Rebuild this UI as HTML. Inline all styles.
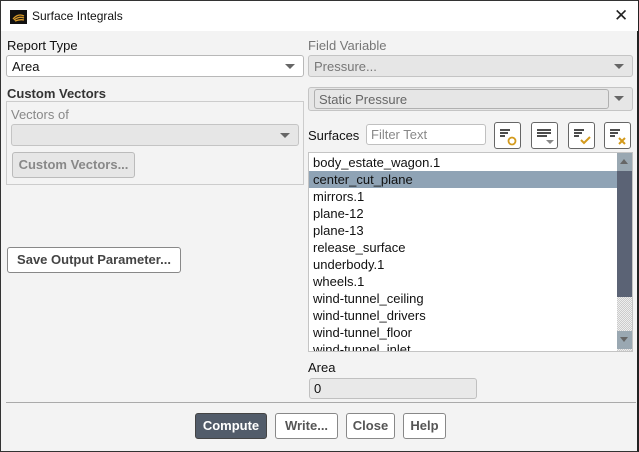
<!DOCTYPE html>
<html><head><style>
*{box-sizing:border-box;margin:0;padding:0}
body{width:639px;height:452px;background:#fff;font-family:"Liberation Sans","DejaVu Sans",sans-serif;font-size:13px;color:#111;position:relative;overflow:hidden}
.win{position:absolute;left:0;top:0;width:639px;height:452px;border:1px solid #333;border-right:2px solid #222;background:#f3f3f3}
.title{position:absolute;left:0;top:0;width:637px;height:30px;background:#fff}
.a{position:absolute}
.dd{position:absolute;border:1px solid #b8b8b8;border-radius:3px;background:#fff;padding:3px 0 0 5px;height:22px}
.dd.g{background:#e6e6e6;color:#777;border-color:#c4c4c4}
.arr{position:absolute;right:8px;top:8px;width:0;height:0;border-left:5px solid transparent;border-right:5px solid transparent;border-top:5px solid #666}
.btn{position:absolute;border:1px solid #888;border-radius:3px;background:#fff;font-weight:bold;color:#555;text-align:center;height:26px;line-height:24px}
.ib{position:absolute;top:121px;width:27px;height:27px;border:1px solid #666;border-radius:3px;background:#fff}
.li{height:17px;line-height:17px;padding-left:4px;white-space:nowrap}
</style></head><body>
<div class="win">
<div class="title">
<svg class="a" style="left:9px;top:9px" width="17" height="14"><rect width="17" height="14" fill="#111"/><path d="M3 9 Q8 3 14 6 M4 10 Q9 6 14 8 M5 11 Q10 9 14 10" stroke="#d89a2a" stroke-width="1.3" fill="none"/></svg>
<div class="a" style="left:31px;top:8px;font-size:12px">Surface Integrals</div>
<div class="a" style="left:613px;top:5px;font-size:17px;color:#222">✕</div>
</div>
<div class="a" style="left:6px;top:37px">Report Type</div>
<div class="dd" style="left:5px;top:54px;width:298px">Area<div class="arr"></div></div>
<div class="a" style="left:6px;top:85px;font-weight:bold;color:#333">Custom Vectors</div>
<div class="a" style="left:5px;top:100px;width:298px;height:84px;border:1px solid #ccc"></div>
<div class="a" style="left:10px;top:106px;color:#888">Vectors of</div>
<div class="dd g" style="left:10px;top:123px;width:288px"><div class="arr"></div></div>
<div class="btn" style="left:11px;top:151px;width:123px;background:#e6e6e6;border-color:#bbb;color:#888">Custom Vectors...</div>
<div class="btn" style="left:6px;top:246px;width:174px;color:#444">Save Output Parameter...</div>

<div class="a" style="left:307px;top:37px;color:#777">Field Variable</div>
<div class="dd g" style="left:307px;top:54px;width:325px">Pressure...<div class="arr"></div></div>
<div class="a" style="left:307px;top:86px;width:325px;height:24px;border:1px solid #c4c4c4;border-radius:3px;background:#e6e6e6"><div class="a" style="left:5px;top:1px;width:295px;height:20px;border:1px solid #b0b0b0;border-radius:3px;padding:2px 0 0 4px;color:#666">Static Pressure</div><div class="arr"></div></div>
<div class="a" style="left:307px;top:127px">Surfaces</div>
<div class="a" style="left:365px;top:123px;width:120px;height:21px;border:1px solid #c0c0c0;border-radius:3px;background:#fff;color:#888;padding:2px 0 0 4px">Filter Text</div>
<div class="ib" style="left:493px"><svg width="25" height="25"><path d="M5 7h10M5 10h8M5 13h5" stroke="#111" stroke-width="1.6"/><circle cx="17" cy="18" r="3.5" stroke="#d39a1c" stroke-width="1.8" fill="none"/></svg></div>
<div class="ib" style="left:530px"><svg width="25" height="25"><path d="M5 7h14M5 10h14M5 13h10" stroke="#111" stroke-width="1.6"/><path d="M14 17h8l-4 4z" fill="#888"/></svg></div>
<div class="ib" style="left:567px"><svg width="25" height="25"><path d="M5 7h10M5 10h8M5 13h5" stroke="#111" stroke-width="1.6"/><path d="M12 17l3 3 6-6" stroke="#d39a1c" stroke-width="2" fill="none"/></svg></div>
<div class="ib" style="left:603px"><svg width="25" height="25"><path d="M5 7h10M5 10h8M5 13h5" stroke="#111" stroke-width="1.6"/><path d="M14 15l6 6M20 15l-6 6" stroke="#d39a1c" stroke-width="2"/></svg></div>

<div class="a" style="left:307px;top:151px;width:325px;height:200px;border:1px solid #c4c4c4;background:#fff;overflow:hidden">
<div style="width:308px;padding-top:1px">
<div class="li">body_estate_wagon.1</div>
<div class="li" style="background:#8fa3b5">center_cut_plane</div>
<div class="li">mirrors.1</div><div class="li">plane-12</div><div class="li">plane-13</div><div class="li">release_surface</div><div class="li">underbody.1</div><div class="li">wheels.1</div><div class="li">wind-tunnel_ceiling</div><div class="li">wind-tunnel_drivers</div><div class="li">wind-tunnel_floor</div><div class="li">wind-tunnel_inlet</div>
</div>
<div class="a" style="left:308px;top:0;width:15px;height:198px;background:repeating-conic-gradient(#ccc 0 25%,#eee 0 50%) 0 0/2px 2px"></div>
<div class="a" style="left:308px;top:0;width:15px;height:18px;background:#9aa8b2"><div class="a" style="left:3px;top:6px;border-left:4px solid transparent;border-right:4px solid transparent;border-bottom:5px solid #666"></div></div>
<div class="a" style="left:308px;top:18px;width:15px;height:126px;background:#5b6375"></div>
<div class="a" style="left:308px;top:178px;width:15px;height:18px;background:#9aa8b2"><div class="a" style="left:3px;top:6px;border-left:4px solid transparent;border-right:4px solid transparent;border-top:5px solid #666"></div></div>
</div>
<div class="a" style="left:307px;top:359px">Area</div>
<div class="a" style="left:308px;top:377px;width:168px;height:21px;border:1px solid #c0c0c0;border-radius:3px;background:#e9e9e9;padding:2px 0 0 4px">0</div>
<div class="a" style="left:5px;top:401px;width:630px;height:1px;background:#aaa"></div>
<div class="btn" style="left:194px;top:412px;width:72px;background:#525c6a;border-color:#444;color:#fff">Compute</div>
<div class="btn" style="left:274px;top:412px;width:63px">Write...</div>
<div class="btn" style="left:345px;top:412px;width:49px">Close</div>
<div class="btn" style="left:402px;top:412px;width:43px">Help</div>
</div>
</body></html>
